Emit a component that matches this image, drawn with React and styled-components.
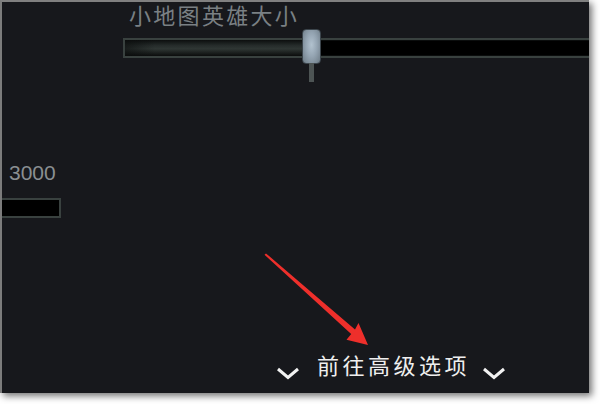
import React from "react";
import styled, { createGlobalStyle } from "styled-components";

const Global = createGlobalStyle`
  html, body { margin: 0; padding: 0; background: #ffffff; }
  body { width: 600px; height: 404px; overflow: hidden; font-family: "Noto Sans CJK SC", "Noto Sans", sans-serif; }
`;

const Panel = styled.div`
  position: relative;
  box-sizing: border-box;
  width: 589px;
  height: 393px;
  border-top: 2px solid #808080;
  border-left: 2px solid #7c7c7c;
  background: #17181c;
  box-shadow: 3px 3px 7px rgba(0, 0, 0, 0.55);
  display: flex;
  flex-direction: column;
`;

const Clip = styled.div`
  flex: 1;
  display: flex;
  flex-direction: column;
  overflow-x: clip;
  overflow-y: visible;
`;

const SliderBlock = styled.div`
  display: flex;
  flex-direction: column;
`;

const Label = styled.div`
  margin-left: 127px;
  font-size: 22px;
  line-height: 24px;
  letter-spacing: 2.3px;
  color: #7a8084;
  white-space: nowrap;
`;

const Track = styled.div`
  position: relative;
  box-sizing: border-box;
  margin: 12px 0 0 121px;
  width: 480px;
  height: 20px;
  flex-shrink: 0;
  border: 2px solid #39413f;
  background: #000;
  box-shadow: inset 0 0 0 1px #0b0d0d;
`;

const Fill = styled.div`
  height: 100%;
  background:
    linear-gradient(90deg, rgba(10, 12, 12, 0.6), rgba(10, 12, 12, 0) 30px),
    linear-gradient(180deg, #0c0e0e 0%, #262c2b 35%, #2f3634 55%, #1b1f1e 80%, #0b0c0c 100%);
`;

const Thumb = styled.div`
  position: absolute;
  left: 177px;
  top: -11px;
  width: 19px;
  height: 35px;
  box-sizing: border-box;
  border-radius: 4px;
  border: 1px solid #3c454c;
  background: radial-gradient(ellipse at 50% 45%, #b2c2cf 0%, #95a5b3 45%, #6d7b86 100%);
  &::after {
    content: "";
    position: absolute;
    left: 6px;
    top: 100%;
    width: 5px;
    height: 19px;
    background: #4d5454;
  }
`;

const ValueBlock = styled.div`
  display: flex;
  flex-direction: column;
  margin-top: 103px;
`;

const ValueText = styled.div`
  margin-left: 7px;
  font-family: "Liberation Sans", Arial, sans-serif;
  font-size: 21px;
  line-height: 24px;
  color: #8a8f92;
`;

const ValueBox = styled.div`
  box-sizing: border-box;
  margin: 13px 0 0 -10px;
  width: 69px;
  height: 20px;
  border: 2px solid #39413f;
  background: #000;
`;

const Footer = styled.div`
  margin-top: auto;
  padding: 0 0 13px 274px;
  display: flex;
  align-items: flex-start;
`;

const FooterText = styled.div`
  margin: 0 12px 0 17px;
  font-size: 22px;
  line-height: 24px;
  letter-spacing: 3.5px;
  color: #efefef;
  white-space: nowrap;
`;

const ChevronSvg = styled.svg`
  margin-top: 15px;
  flex-shrink: 0;
`;

const ArrowSvg = styled.svg`
  position: absolute;
  left: -2px;
  top: -2px;
  pointer-events: none;
`;

const Chevron = () => (
  <ChevronSvg width="24" height="13" viewBox="0 0 24 13">
    <path d="M2 2 L12 10.5 L22 2" fill="none" stroke="#f2f2f2" strokeWidth="3" />
  </ChevronSvg>
);

export default function App() {
  return (
    <>
      <Global />
      <Panel>
        <Clip>
          <SliderBlock>
            <Label>小地图英雄大小</Label>
            <Track>
              <Fill style={{ width: "186px" }} />
              <Thumb />
            </Track>
          </SliderBlock>
          <ValueBlock>
            <ValueText>3000</ValueText>
            <ValueBox />
          </ValueBlock>
          <Footer>
            <Chevron />
            <FooterText>前往高级选项</FooterText>
            <Chevron />
          </Footer>
        </Clip>
        <ArrowSvg width="600" height="404" viewBox="0 0 600 404">
          <polygon
            points="264.5,254.8 266,253.4 355,329.5 358.5,323 368,345 346.5,339.8 351.2,334"
            fill="#ee2f2b"
          />
        </ArrowSvg>
      </Panel>
    </>
  );
}
